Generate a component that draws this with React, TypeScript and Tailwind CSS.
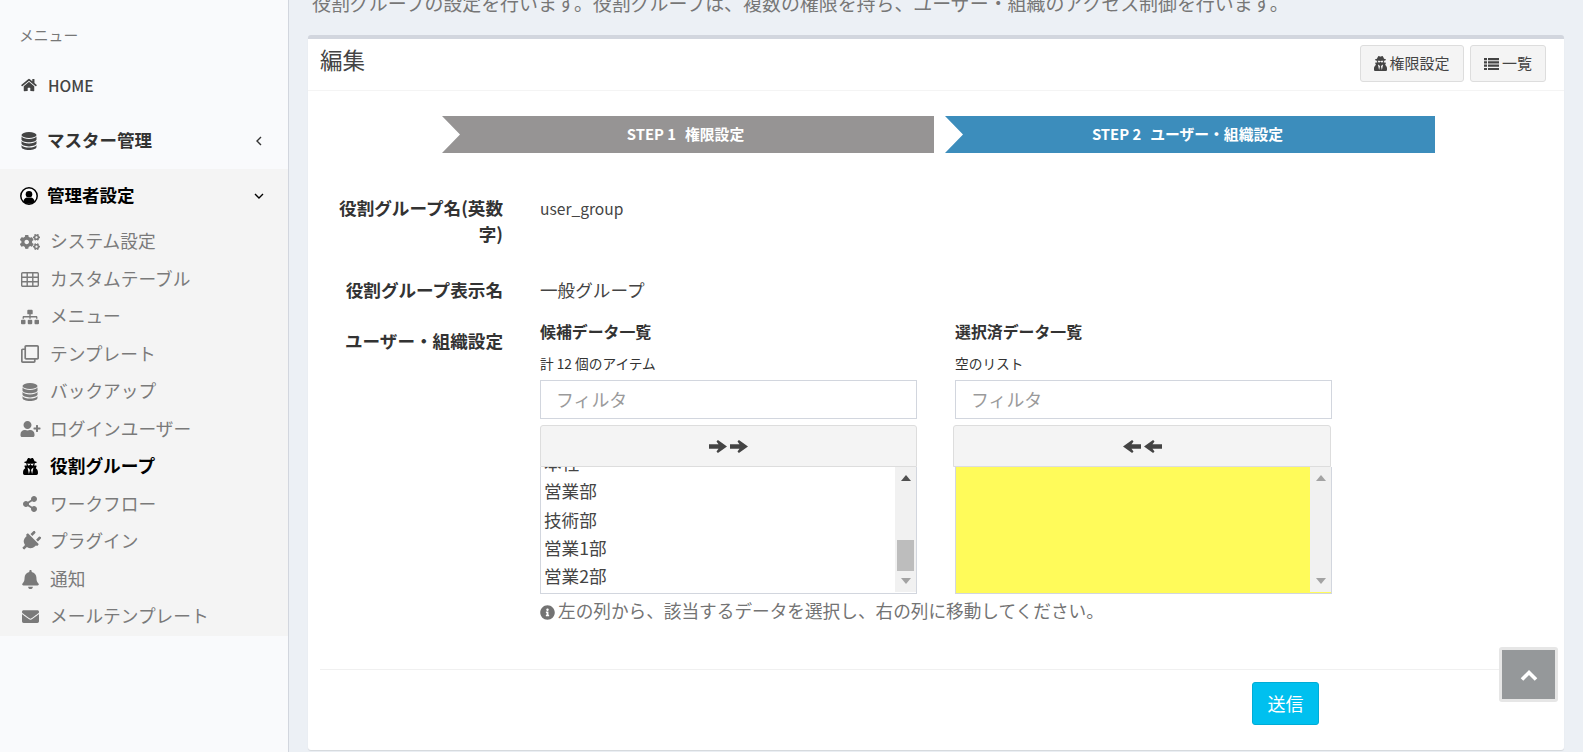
import React from "react";
import {
  FaHome, FaCogs, FaSitemap, FaRegClone, FaUserPlus, FaUserSecret,
  FaShareAlt, FaPlug, FaBell, FaEnvelope, FaInfoCircle,
} from "react-icons/fa";

type IconProps = { className?: string };

function DbIcon({ className }: IconProps) {
  return (
    <svg viewBox="0 0 16 18" className={className} fill="currentColor">
      <ellipse cx="8" cy="3" rx="7.5" ry="3" />
      <path d="M.5 4.6C1.6 6.2 4.6 7 8 7s6.4-.8 7.5-2.4V7.4C15.5 9 12.2 10.2 8 10.2S.5 9 .5 7.4z" />
      <path d="M.5 9C1.6 10.6 4.6 11.4 8 11.4s6.4-.8 7.5-2.4v2.6c0 1.6-3.300 2.800-7.500 2.800S.5 13.200.5 11.600z" />
      <path d="M.5 13.200c1.100 1.600 4.100 2.400 7.500 2.400s6.400-.8 7.500-2.400V15c0 1.600-3.300 3-7.500 3S.5 16.600.5 15z" />
    </svg>
  );
}
function GridIcon({ className }: IconProps) {
  return (
    <svg viewBox="0 0 18 15" className={className} fill="none" stroke="currentColor" strokeWidth="1.4">
      <rect x=".7" y=".7" width="16.600" height="13.600" rx="1" />
      <path d="M.7 5.300h16.600M.7 9.800h16.600M6.200.7v13.600M11.800.7v13.600" />
    </svg>
  );
}
function UserRing({ className }: IconProps) {
  return (
    <svg viewBox="0 0 18 18" className={className}>
      <circle cx="9" cy="9" r="8.200" fill="#fff" stroke="currentColor" strokeWidth="1.500" />
      <circle cx="9" cy="7.200" r="3.300" fill="currentColor" />
      <path d="M3.300 14.400c.5-2.800 2.500-4 3.700-4 1.200.6 2.800.6 4 0 1.200 0 3.200 1.200 3.700 4-1.400 1.500-3.400 2.400-5.700 2.400s-4.300-.9-5.700-2.400z" fill="currentColor" />
    </svg>
  );
}
function ArrowIcon({ left }: { left?: boolean }) {
  return (
    <svg viewBox="0 0 18 13" className={`w-[18px] h-[13px] ${left ? "-scale-x-100" : ""}`} fill="currentColor">
      <path d="M0 4.300h9.500L7.500 1.400 8.900 0 18 6.500 8.900 13l-1.400-1.400 2-2.900H0z" />
    </svg>
  );
}
function ListIcon() {
  return (
    <svg viewBox="0 0 15 14" className="w-[15px] h-[14px]" fill="currentColor">
      <path d="M0 1h3v2.200H0zM4 1h11v2.200H4zM0 4.300h3v2.200H0zM4 4.300h11v2.200H4zM0 7.600h3v2.200H0zM4 7.600h11v2.200H4zM0 10.900h3v2.200H0zM4 10.900h11v2.200H4z" />
    </svg>
  );
}
function Angle({ d }: { d: string }) {
  return (
    <svg viewBox="0 0 12 12" className="w-[12px] h-[12px]" fill="none" stroke="currentColor" strokeWidth="1.400">
      <path d={d} />
    </svg>
  );
}

const subItems: [React.ComponentType<IconProps>, string, string, boolean?][] = [
  [FaCogs, "w-[20px] h-[18px]", "システム設定"],
  [GridIcon, "w-[18px] h-[15px]", "カスタムテーブル"],
  [FaSitemap, "w-[18px] h-[16px]", "メニュー"],
  [FaRegClone, "w-[18px] h-[18px]", "テンプレート"],
  [DbIcon, "w-[16px] h-[18px]", "バックアップ"],
  [FaUserPlus, "w-[21px] h-[16px]", "ログインユーザー"],
  [FaUserSecret, "w-[15px] h-[17px]", "役割グループ", true],
  [FaShareAlt, "w-[16px] h-[16px]", "ワークフロー"],
  [FaPlug, "w-[21px] h-[21px] rotate-45", "プラグイン"],
  [FaBell, "w-[17px] h-[19px]", "通知"],
  [FaEnvelope, "w-[19px] h-[17px]", "メールテンプレート"],
];

function Scrollbar({ thumb, dark }: { thumb?: boolean; dark?: boolean }) {
  return (
    <div className="w-[21px] shrink-0 h-[125px] bg-[#f1f1f1] flex flex-col items-center pt-[8px] pb-[8px] justify-between relative">
      <div className={`w-0 h-0 border-x-[5px] border-x-transparent border-b-[6px] ${dark ? "border-b-[#505050]" : "border-b-[#a3a3a3]"}`} />
      {thumb && <div className="absolute left-[2px] top-[73px] w-[17px] h-[31px] bg-[#bdbdbd]" />}
      <div className="w-0 h-0 border-x-[5px] border-x-transparent border-t-[6px] border-t-[#a3a3a3]" />
    </div>
  );
}

function Column({ title, count, left }: { title: string; count: string; left?: boolean }) {
  return (
    <div className="w-[377px] shrink-0">
      <div className="h-[24px] leading-[24px] text-[15.9px] font-bold text-[#333]">{title}</div>
      <div className="mt-[9px] h-[20px] leading-[20px] text-[13.7px] text-[#333]">{count}</div>
      <div className="mt-[7px] h-[39px] border border-[#d2d6de] bg-white pl-[15px] flex items-center text-[17.9px] text-[#9a9a9a]">フィルタ</div>
      <div className={`mt-[6px] h-[42px] border border-[#ddd] bg-[#f4f4f4] rounded-t-[3px] flex items-center justify-center gap-[3px] text-[#444] ${left ? "-ml-[2px] w-[378px]" : ""}`}>
        <ArrowIcon left={left} />
        <ArrowIcon left={left} />
      </div>
      {left ? (
        <div className="h-[127px] border border-[#d2d6de] border-t-0 bg-[#fffb5a] flex justify-end items-start overflow-hidden">
          <Scrollbar />
        </div>
      ) : (
        <div className="h-[127px] border border-[#d2d6de] border-t-0 bg-white flex justify-between items-start overflow-hidden">
          <div className="pl-[3px] -mt-[18px] text-[17.6px] leading-[28.3px] text-[#444]">
            <div>本社</div>
            <div>営業部</div>
            <div>技術部</div>
            <div>営業1部</div>
            <div>営業2部</div>
          </div>
          <Scrollbar thumb dark />
        </div>
      )}
    </div>
  );
}

export default function App() {
  return (
    <div
      className="h-[752px] w-[1583px] overflow-hidden flex bg-[#ecf0f5] relative text-[#444]"
      style={{ fontFamily: '"Noto Sans CJK JP", "Noto Sans", sans-serif' }}
    >
      <aside className="w-[289px] shrink-0 bg-[#f9fafc] border-r border-[#d2d6de]">
        <div className="mt-[25px] ml-[19px] h-[20px] leading-[20px] text-[14.8px] text-[#777]">メニュー</div>
        <div className="mt-[12px] h-[56px] flex items-center pl-[21px] text-[#444] font-medium text-[15.6px]">
          <FaHome className="w-[16px] h-[14px]" />
          <span className="ml-[11px] mt-[1px]">HOME</span>
        </div>
        <div className="h-[56px] flex items-center pl-[21px] pr-[23px] text-[#333] font-bold text-[17.5px]">
          <DbIcon className="w-[16px] h-[18px] text-[#444]" />
          <span className="ml-[10px] flex-1 -mt-[2px]">マスター管理</span>
          <Angle d="M8 2 L4 6 L8 10" />
        </div>
        <div className="bg-[#f4f4f4]">
          <div className="h-[54px] flex items-center pl-[20px] pr-[23px] text-black font-bold text-[17.5px]">
            <UserRing className="w-[18px] h-[18px]" />
            <span className="ml-[9px] flex-1 -mt-[2px]">管理者設定</span>
            <Angle d="M2 4 L6 8 L10 4" />
          </div>
          {subItems.map(([Icon, size, label, active]) => (
            <div
              key={label}
              className={`h-[37.5px] flex items-center text-[17.7px] ${active ? "text-black font-bold" : "text-[#7a7a7a]"}`}
            >
              <span className="w-[50px] shrink-0 pl-[20px] pr-[10px] flex justify-center">
                <Icon className={`${size} shrink-0`} />
              </span>
              <span className="-mt-[2px]">{label}</span>
            </div>
          ))}
        </div>
      </aside>

      <main className="flex-1 min-w-0">
        <p className="-mt-[11px] pl-[23px] h-[28px] leading-[28px] text-[18.93px] text-[#777] whitespace-nowrap">
          役割グループの設定を行います。役割グループは、複数の権限を持ち、ユーザー・組織のアクセス制御を行います。
        </p>
        <section className="mt-[18px] ml-[19px] w-[1256px] h-[715px] bg-white border-t-4 border-[#d2d6de] rounded-[3px] shadow-[0_1px_1px_rgba(0,0,0,0.1)]">
          <header className="h-[52px] border-b border-[#f4f4f4] flex items-center pl-[12px] pr-[18px]">
            <h2 className="flex-1 -mt-[9px] text-[22.5px] font-normal text-[#444]">編集</h2>
            <div className="flex gap-[6px] self-start mt-[6px]">
              <button className="w-[104px] h-[37px] border border-[#ddd] rounded-[3px] bg-[#f4f4f4] text-[15px] text-[#444] flex items-center justify-center gap-[2px]">
                <FaUserSecret className="w-[13px] h-[15px]" />権限設定
              </button>
              <button className="w-[76px] h-[37px] border border-[#ddd] rounded-[3px] bg-[#f4f4f4] text-[15px] text-[#444] flex items-center justify-center gap-[3px]">
                <ListIcon />一覧
              </button>
            </div>
          </header>

          <div className="mt-[25px] ml-[134px] flex gap-[11px] text-white font-bold text-[14.8px]">
            <div className="w-[492px] h-[37px] pr-[5px] bg-[#969494] flex items-center justify-center gap-[9px] [clip-path:polygon(0_0,100%_0,100%_100%,0_100%,18px_50%)]">
              <span>STEP 1</span><span>権限設定</span>
            </div>
            <div className="w-[490px] h-[37px] pr-[5px] bg-[#3c8dbc] flex items-center justify-center gap-[9px] [clip-path:polygon(0_0,100%_0,100%_100%,0_100%,18px_50%)]">
              <span>STEP 2</span><span>ユーザー・組織設定</span>
            </div>
          </div>

          <div className="mt-[43px] grid grid-cols-[195px_1fr] gap-x-[37px]">
            <label className="pl-[20px] -mt-[1px] text-right font-bold text-[17.6px] leading-[26px] text-[#333]">役割グループ名(英数字)</label>
            <div className="-mt-[1px] text-[15.6px] leading-[26px]">user_group</div>

            <label className="mt-[30px] text-right font-bold text-[17.6px] leading-[26px] text-[#333]">役割グループ表示名</label>
            <div className="mt-[30px] text-[17.6px] leading-[26px]">一般グループ</div>

            <label className="mt-[25px] text-right font-bold text-[17.6px] leading-[26px] text-[#333]">ユーザー・組織設定</label>
            <div className="mt-[17px]">
              <div className="flex gap-[38px]">
                <Column title="候補データ一覧" count="計 12 個のアイテム" />
                <Column title="選択済データ一覧" count="空のリスト" left />
              </div>
              <div className="mt-[4px] h-[26px] leading-[26px] text-[17.65px] text-[#737373] flex items-center gap-[3px]">
                <FaInfoCircle className="w-[15px] h-[15px] mt-[2px]" />
                左の列から、該当するデータを選択し、右の列に移動してください。
              </div>
            </div>
          </div>

          <div className="mt-[45px] mx-[12px] border-t border-[#f0f0f0] pt-[12px] pl-[932px]">
            <button className="w-[67px] h-[43px] rounded-[3px] bg-[#00c0ef] border border-[#00acd6] text-white text-[18px]">送信</button>
          </div>
        </section>
      </main>

      <button className="absolute left-[1499px] top-[647px] w-[59px] h-[55px] bg-[#95989a] border-[3px] border-[#e6e6e6] rounded-[3px] flex items-center justify-center text-white">
        <svg viewBox="0 0 18 12" className="w-[18px] h-[12px]" fill="none" stroke="currentColor" strokeWidth="3.600">
          <path d="M2 10.500 L9 3.500 L16 10.500" />
        </svg>
      </button>
    </div>
  );
}
